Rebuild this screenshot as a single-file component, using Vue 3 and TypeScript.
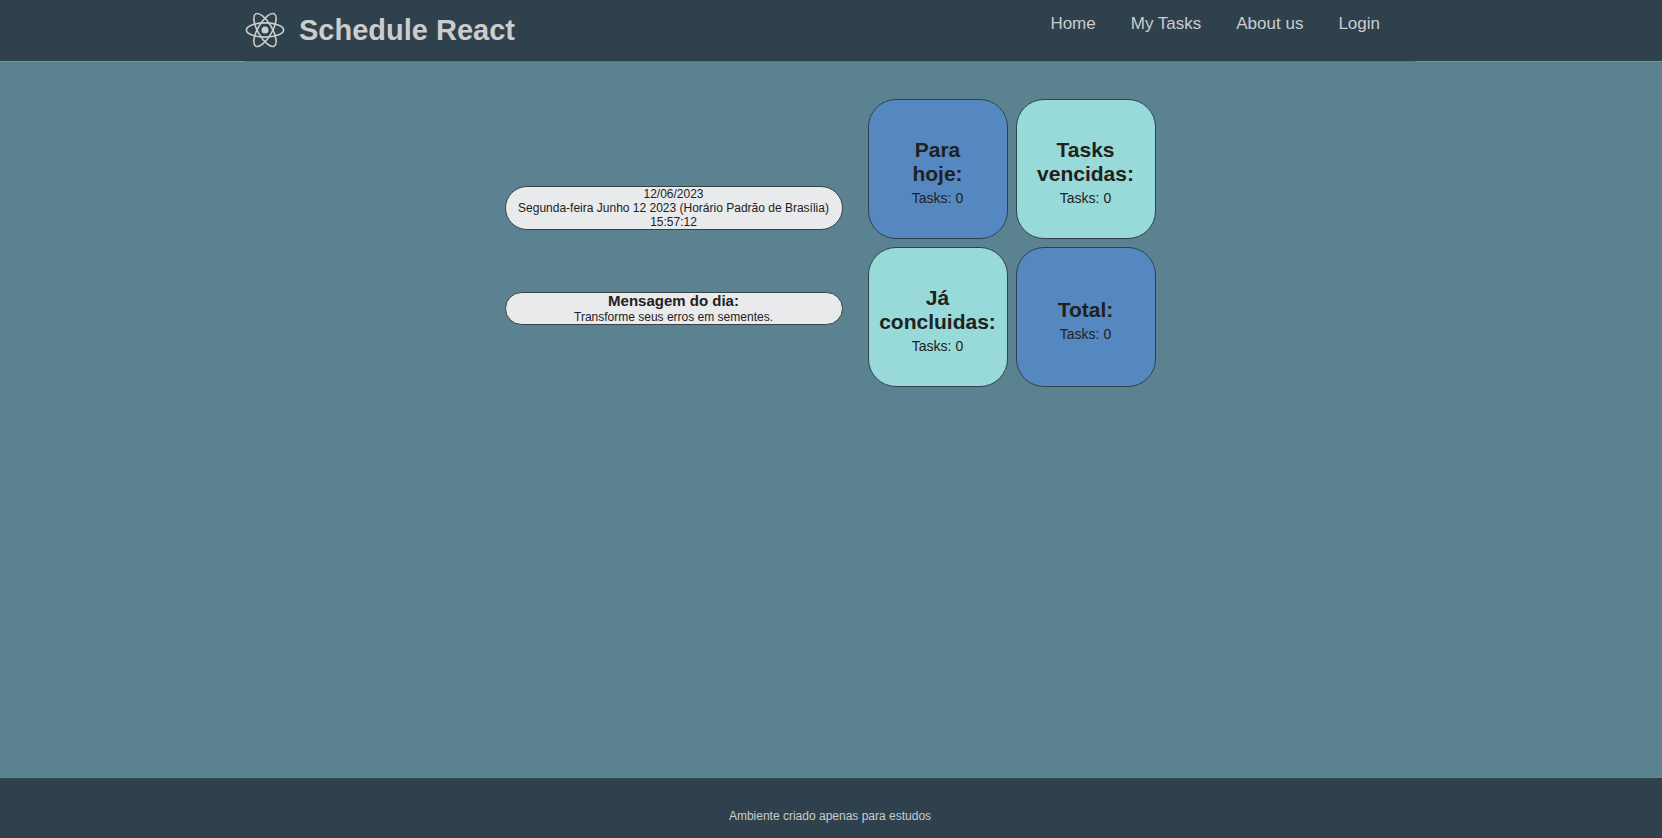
<script setup lang="ts">
interface NavLink {
  label: string
  href: string
}

interface TaskCard {
  title: string
  count: number
  tone: 'blue' | 'aqua'
}

const links: NavLink[] = [
  { label: 'Home', href: '#home' },
  { label: 'My Tasks', href: '#tasks' },
  { label: 'About us', href: '#about' },
  { label: 'Login', href: '#login' },
]

const cards: TaskCard[] = [
  { title: 'Para hoje:', count: 0, tone: 'blue' },
  { title: 'Tasks vencidas:', count: 0, tone: 'aqua' },
  { title: 'Já concluidas:', count: 0, tone: 'aqua' },
  { title: 'Total:', count: 0, tone: 'blue' },
]
</script>

<template>
  <div class="page">
    <header class="header">
      <div class="bar">
        <a class="brand" href="#home">
          <svg class="logo" viewBox="0 0 40 40" aria-hidden="true">
            <g fill="none" stroke="currentColor" stroke-width="1.6">
              <ellipse cx="20" cy="20" rx="18.6" ry="7.1" />
              <ellipse cx="20" cy="20" rx="18.6" ry="7.1" transform="rotate(60 20 20)" />
              <ellipse cx="20" cy="20" rx="18.6" ry="7.1" transform="rotate(120 20 20)" />
            </g>
            <circle cx="20" cy="20" r="3.5" fill="currentColor" />
          </svg>
          <h1 class="name">Schedule React</h1>
        </a>
        <nav class="nav">
          <a v-for="link in links" :key="link.label" :href="link.href">{{ link.label }}</a>
        </nav>
      </div>
    </header>

    <main class="main">
      <section class="info">
        <div class="pill">
          <p>12/06/2023</p>
          <p>Segunda-feira Junho 12 2023 (Horário Padrão de Brasília)</p>
          <p>15:57:12</p>
        </div>
        <div class="pill">
          <h2>Mensagem do dia:</h2>
          <p>Transforme seus erros em sementes.</p>
        </div>
      </section>
      <section class="cards">
        <article v-for="card in cards" :key="card.title" class="card" :class="card.tone">
          <h2>{{ card.title }}</h2>
          <p>Tasks: {{ card.count }}</p>
        </article>
      </section>
    </main>

    <footer class="footer">
      <p>Ambiente criado apenas para estudos</p>
    </footer>
  </div>
</template>

<style>
body {
  margin: 0;
  background: #5b8291;
}
</style>

<style scoped>
.page {
  display: flex;
  flex-direction: column;
  min-height: 100vh;
  color: #212121;
  background: #5b8291;
  font-family: "Liberation Sans", Arial, sans-serif;
}

.page h1,
.page h2,
.page p {
  margin: 0;
}

.header,
.main,
.footer {
  padding-right: 2px;
}

.header {
  background: #2f414d;
  box-shadow: inset 0 -1px #7991a0;
}

.bar {
  box-sizing: border-box;
  display: flex;
  justify-content: space-between;
  align-items: flex-start;
  max-width: 1170px;
  height: 62px;
  margin: 0 auto;
  padding-right: 35px;
  border-bottom: 1px solid #5a7382;
}

.brand {
  display: flex;
  align-items: center;
  gap: 14px;
  height: 60px;
  color: #cccccc;
  text-decoration: none;
}

.logo {
  width: 40px;
  height: 40px;
}

.name {
  font-size: 29px;
  line-height: 32px;
}

.nav {
  display: flex;
  gap: 35px;
  padding-top: 13px;
}

.nav a {
  color: #cccccc;
  font-size: 17px;
  line-height: 22px;
  text-decoration: none;
}

.main {
  flex: 1;
  display: flex;
  justify-content: center;
  align-items: flex-start;
  gap: 25px;
  padding-top: 37px;
}

.info {
  display: flex;
  flex-direction: column;
  flex: 0 1 338px;
  gap: 62px;
  padding-top: 87px;
}

.pill {
  padding: 0 6px;
  border: 1px solid #3c4043;
  border-radius: 22px;
  background: #e9eaec;
  font-size: 12px;
  line-height: 14px;
  text-align: center;
}

.pill h2 {
  padding-bottom: 1px;
  font-size: 15px;
  line-height: 16px;
}

.cards {
  display: grid;
  grid-template-columns: repeat(2, 140px);
  grid-auto-rows: 140px;
  gap: 8px;
}

.card {
  display: flex;
  flex-direction: column;
  justify-content: center;
  align-items: center;
  gap: 4px;
  padding: 6px 8px 0;
  border: 1px solid #2f414d;
  border-radius: 28px;
  font-size: 14px;
  line-height: 16px;
  text-align: center;
}

.card h2 {
  width: min-content;
  font-size: 21px;
  line-height: 24px;
}

.blue {
  background: #5588c0;
}

.aqua {
  background: #98dad9;
}

.footer {
  box-sizing: border-box;
  height: 61px;
  padding-top: 31px;
  border-top: 1px solid #6f7f86;
  background: #2f414d;
  color: #cccccc;
  font-size: 12px;
  line-height: 14px;
  text-align: center;
}
</style>
